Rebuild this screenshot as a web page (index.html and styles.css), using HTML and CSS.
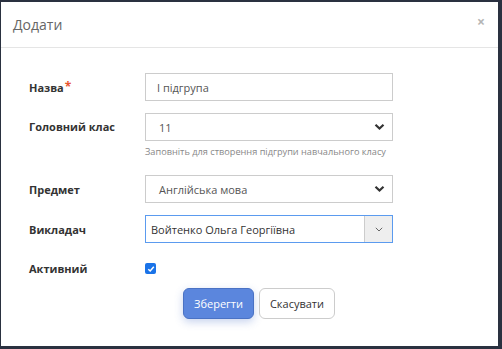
FILE: index.html
```html
<!DOCTYPE html>
<html lang="uk">
<head>
    <meta charset="UTF-8">
    <meta name="viewport" content="width=device-width, initial-scale=1.0">
    <title>Додати</title>
    <link rel="stylesheet" href="styles.css">
</head>
<body>
    <div class="backdrop">
        <div class="modal">
            <div class="modal-header">
                <h4 class="modal-title">Додати</h4>
                <span class="modal-close">&times;</span>
            </div>
            <form class="modal-body">
                <div class="form-row">
                    <label class="form-label">Назва<span class="required">*</span></label>
                    <div class="form-control-wrap">
                        <div class="form-input">І підгрупа</div>
                    </div>
                </div>
                <div class="form-row row-help">
                    <label class="form-label">Головний клас</label>
                    <div class="form-control-wrap">
                        <div class="form-input form-select">
                            <span class="select-value">11</span>
                            <svg class="chevron" width="11" height="8" viewBox="0 0 11 8"><path d="M1.5 1.8 L5.5 5.6 L9.5 1.8" fill="none" stroke="#333" stroke-width="2.2"/></svg>
                        </div>
                        <div class="help-text">Заповніть для створення підгрупи навчального класу</div>
                    </div>
                </div>
                <div class="form-row">
                    <label class="form-label">Предмет</label>
                    <div class="form-control-wrap">
                        <div class="form-input form-select">
                            <span class="select-value">Англійська мова</span>
                            <svg class="chevron" width="11" height="8" viewBox="0 0 11 8"><path d="M1.5 1.8 L5.5 5.6 L9.5 1.8" fill="none" stroke="#333" stroke-width="2.2"/></svg>
                        </div>
                    </div>
                </div>
                <div class="form-row">
                    <label class="form-label">Викладач</label>
                    <div class="form-control-wrap">
                        <div class="form-input combo">
                            <span class="combo-value">Войтенко Ольга Георгіївна</span>
                            <span class="combo-btn">
                                <svg width="8" height="5" viewBox="0 0 8 5"><path d="M0.8 0.8 L4 4 L7.2 0.8" fill="none" stroke="#666" stroke-width="1"/></svg>
                            </span>
                        </div>
                    </div>
                </div>
                <div class="form-row row-check">
                    <label class="form-label">Активний</label>
                    <div class="form-control-wrap">
                        <span class="checkbox">
                            <svg width="10" height="10" viewBox="0 0 10 10"><path d="M2.3 5.2 L4.2 7 L7.8 2.8" fill="none" stroke="#fff" stroke-width="1.5"/></svg>
                        </span>
                    </div>
                </div>
                <div class="form-actions">
                    <button type="button" class="btn btn-primary">Зберегти</button>
                    <button type="button" class="btn btn-default">Скасувати</button>
                </div>
            </form>
        </div>
    </div>
</body>
</html>
```

FILE: styles.css
```css
:root {
    --border-color: #cccccc;
    --text-color: #333333;
    --muted-color: #888888;
    --primary-color: #5b86dd;
    --focus-color: #5b9bef;
}

body {
    margin: 0;
    padding: 0;
    background-color: #2a3140;
    font-family: 'Open Sans', 'Noto Sans', sans-serif;
    color: var(--text-color);
}

.backdrop {
    padding: 2px 4px 3px 1px;
    height: 344px;
}

.modal {
    background: #ffffff;
    height: 100%;
    box-sizing: border-box;
}

.modal-header {
    height: 45px;
    border-bottom: 1px solid #e5e5e5;
    display: flex;
    align-items: center;
    justify-content: space-between;
    padding: 0 13px 0 12px;
}

.modal-title {
    margin: 0;
    font-size: 14px;
    font-weight: 400;
    color: #666666;
}

.modal-close {
    font-size: 14px;
    color: #b5b5b5;
    font-weight: 700;
    margin-top: -6px;
}

.modal-body {
    padding: 25px 105px 0 28px;
}

.form-row {
    display: flex;
    align-items: center;
    margin-bottom: 12px;
}

.form-row.row-help {
    align-items: flex-start;
    margin-bottom: 17px;
}

.row-help .form-label {
    line-height: 28px;
}

.form-row.row-check {
    margin-top: 18px;
    margin-bottom: 12px;
}

.form-label {
    width: 116px;
    flex: none;
    font-size: 11px;
    font-weight: 700;
    color: #333333;
}

.required {
    color: #e8542f;
    margin-left: 1px;
    font-size: 12px;
    position: relative;
    top: -1px;
}

.form-control-wrap {
    width: 248px;
}

.form-input {
    height: 28px;
    box-sizing: border-box;
    border: 1px solid var(--border-color);
    padding: 0 11px;
    font-size: 11px;
    color: #555555;
    display: flex;
    align-items: center;
}

.form-select {
    justify-content: space-between;
    padding: 0 7px 0 13px;
}

.help-text {
    margin-top: 4px;
    font-size: 9.2px;
    line-height: 13px;
    color: var(--muted-color);
    white-space: nowrap;
}

.combo {
    border-color: var(--focus-color);
    padding: 0 0 0 5px;
    color: #333333;
}

.combo-value {
    flex: 1;
}

.combo-btn {
    width: 27px;
    height: 100%;
    background: #eeeeee;
    border-left: 1px solid var(--border-color);
    display: flex;
    align-items: center;
    justify-content: center;
}

.checkbox {
    display: flex;
    align-items: center;
    justify-content: center;
    width: 11px;
    height: 11px;
    border-radius: 2px;
    background: #1a73e8;
}

.form-actions {
    display: flex;
    gap: 5px;
    padding-left: 154px;
}

.btn {
    height: 31px;
    border-radius: 6px;
    font-family: 'Open Sans', 'Noto Sans', sans-serif;
    font-size: 11px;
    padding: 0 8px;
    cursor: pointer;
}

.btn-primary {
    background: var(--primary-color);
    border: 1px solid #4a72c4;
    color: #ffffff;
    width: 71px;
    box-shadow: 0 3px 8px rgba(70, 110, 200, 0.3);
}

.btn-default {
    background: #ffffff;
    border: 1px solid var(--border-color);
    color: #333333;
    width: 76px;
}
```
